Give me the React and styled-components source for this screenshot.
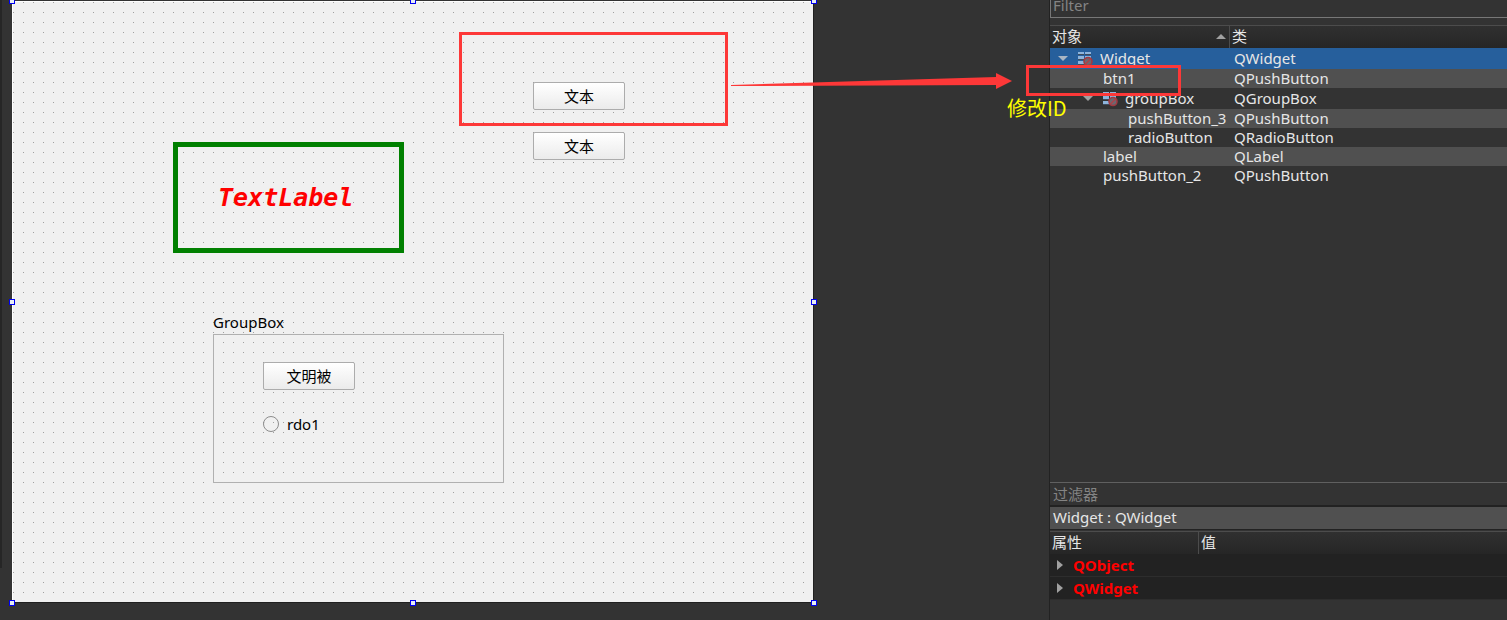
import React from "react";
import styled, { createGlobalStyle } from "styled-components";

const ui = `"Noto Sans", "Noto Sans CJK SC", sans-serif`;
const red = "#fd3838";

const Global = createGlobalStyle`
  * { box-sizing: border-box; }
  body { margin: 0; background: #333; font: 15px/20px ${ui}; color: #e6e6e6; }
  button, input { font: inherit; }
`;

const Page = styled.div`
  display: flex;
  min-height: 100vh;
  overflow: hidden;
`;

const Rail = styled.div`
  flex: 0 0 2px;
  background: #262626;
  margin-bottom: 52px;
`;

const Workspace = styled.main`
  position: relative;
  flex: 1;
  min-width: 0;
  padding: 1px 10px 17px;
`;

const Form = styled.div`
  position: relative;
  width: 801px;
  height: 601px;
  color: #000;
  border: solid #fff;
  border-width: 1px 0 0 1px;
  background-color: #f0f0f0;
  background-image: conic-gradient(from 270deg at 1px 1px, #a0a0a0 90deg, transparent 90deg);
  background-size: 10px 10px;
  box-shadow: 1px 1px 0 #202020;
`;

const Selection = styled.div`
  position: absolute;
  inset: -1px;
  pointer-events: none;
`;

const Handle = styled.i`
  position: absolute;
  left: ${(p) => p.$x};
  top: ${(p) => p.$y};
  width: 6px;
  height: 6px;
  margin: -3px 0 0 -3px;
  border: 1px solid #0000f0;
  background: #e8eef4;
`;

const Placed = styled.div`
  position: absolute;
  left: ${(p) => p.$left}px;
  top: ${(p) => p.$top}px;
`;

const PushButton = styled.button`
  display: block;
  width: 92px;
  height: 28px;
  padding: 0;
  border: 1px solid #acacac;
  border-radius: 2px;
  background: linear-gradient(#fff, #ebebeb);
  color: #000;
`;

const TextLabel = styled.div`
  display: flex;
  align-items: center;
  width: 231px;
  height: 111px;
  padding-left: 40px;
  border: 5px solid #008000;
  color: #f00;
  font: italic bold 25px/30px "DejaVu Sans Mono", monospace;
`;

const GroupTitle = styled.div`
  padding-bottom: 2px;
`;

const GroupFrame = styled.div`
  display: flex;
  flex-direction: column;
  gap: 24px;
  width: 291px;
  height: 149px;
  padding: 27px 49px;
  border: 1px solid #b0b0b0;
`;

const RadioLabel = styled.label`
  display: flex;
  align-items: center;
  gap: 8px;
`;

const Radio = styled.input`
  appearance: none;
  width: 16px;
  height: 16px;
  margin: 0;
  border: 1px solid #8c8c8c;
  border-radius: 50%;
`;

const Mark = styled.div`
  position: absolute;
  left: ${(p) => p.$left}px;
  top: ${(p) => p.$top}px;
  width: ${(p) => p.$w}px;
  height: ${(p) => p.$h}px;
  border: 3px solid ${red};
  pointer-events: none;
`;

const Arrow = styled.div`
  position: absolute;
  left: 729px;
  right: 37px;
  top: 73px;
  display: flex;
  svg { display: block; height: 16px; }
  svg:first-child { flex: 1; min-width: 0; }
`;

const Note = styled.div`
  position: absolute;
  left: -43px;
  top: 96px;
  color: #ff0;
  font-size: 20px;
  line-height: 24px;
  white-space: nowrap;
  font-family: "Noto Sans CJK SC", sans-serif;
`;

const Side = styled.aside`
  position: relative;
  flex: 0 0 458px;
  display: flex;
  flex-direction: column;
  border-left: 1px solid #222;
`;

const ObjectFilter = styled.input`
  height: 26px;
  margin: -8px 0 7px;
  padding: 0 2px;
  border: 1px solid #777;
  border-right: 0;
  background: #333;
  color: #e6e6e6;
  &::placeholder { color: #848484; opacity: 1; }
`;

const TreeArea = styled.div`
  flex: 1;
`;

const Table = styled.table`
  width: 100%;
  table-layout: fixed;
  border-collapse: separate;
  border-spacing: 0;
  th, td { padding: 0; font-weight: 400; text-align: left; white-space: nowrap; }
`;

const HeadCell = styled.th`
  width: ${(p) => p.$w || "auto"};
  height: 23px;
  border-top: 1px solid #4c4c4c;
  border-right: 1px solid #4c4c4c;
  background: linear-gradient(#303030, #262626);
  &:last-child { border-right: 0; }
`;

const HeadLabel = styled.div`
  display: flex;
  align-items: center;
  justify-content: space-between;
  padding: 0 3px 2px 2px;
  line-height: 20px;
`;

const TreeRow = styled.tr`
  height: ${(p) => (p.$tall ? 21 : 19)}px;
  background: ${(p) => p.$bg};
  line-height: 19px;
`;

const NameCell = styled.div`
  display: flex;
  align-items: center;
  padding-left: ${(p) => p.$indent}px;
  svg { flex: none; }
`;

const ClassName = styled.div`
  padding-left: 4px;
`;

const PropertyFilter = styled.input`
  height: 24px;
  padding: 0 3px;
  border: 0;
  border-top: 1px solid #606060;
  border-bottom: 1px solid #222;
  background: #333;
  color: #e6e6e6;
  &::placeholder { color: #848484; opacity: 1; }
`;

const Current = styled.div`
  height: 24px;
  margin-bottom: 1px;
  padding-left: 3px;
  line-height: 20px;
  background: #505050;
  border: solid #222;
  border-width: 1px 0;
`;

const Group = styled.tr`
  height: 23px;
  background: #222;
  color: #f00;
  td { border-bottom: 1px solid #2d2d2d; }
`;

const GroupName = styled.div`
  display: flex;
  align-items: center;
  gap: 10px;
  padding-left: 7px;
  font-weight: 700;
`;

const PropertyArea = styled.div`
  padding-bottom: 20px;
`;

const Caret = ({ color }) => (
  <svg width="10" height="5" viewBox="0 0 10 5"><path d="M0 0h10L5 5z" fill={color} /></svg>
);

const FormIcon = () => (
  <svg width="16" height="16" viewBox="0 0 16 16">
    <path d="M1 1h6v2H1zM8 1h6v2H8zM1 5h6v3H1zM8 5h6v3H8zM1 10h6v3H1z" fill="#8db4dc" />
    <path d="M1 3h6v1H1zM8 3h6v1H8zM1 8h6v1H1zM1 13h6v1H1z" fill="#3f4c5c" />
    <circle cx="11" cy="10.5" r="4" fill="#6c6870" stroke="#a03a42" strokeWidth="1.6" />
    <path d="M8.3 13.2l5.4-5.4" stroke="#b04048" strokeWidth="1.4" />
  </svg>
);

const IconSlot = styled.span`
  display: flex;
  margin: 0 7px 0 9px;
`;

const objects = [
  { name: "Widget", cls: "QWidget", depth: 8, open: true, bg: "#265f9c", caret: "#a9b6c4" },
  { name: "btn1", cls: "QPushButton", depth: 53, bg: "#505050" },
  { name: "groupBox", cls: "QGroupBox", depth: 33, open: true, bg: "#333", caret: "#a0a0a0" },
  { name: "pushButton_3", cls: "QPushButton", depth: 78, bg: "#505050" },
  { name: "radioButton", cls: "QRadioButton", depth: 78, bg: "#333" },
  { name: "label", cls: "QLabel", depth: 53, bg: "#505050" },
  { name: "pushButton_2", cls: "QPushButton", depth: 53, bg: "#333" },
];

const handles = [
  ["0%", "0%"], ["50%", "0%"], ["100%", "0%"],
  ["0%", "50%"], ["100%", "50%"],
  ["0%", "100%"], ["50%", "100%"], ["100%", "100%"],
];

export default function App() {
  return (
    <>
      <Global />
      <Page>
        <Rail />
        <Workspace>
          <Form>
            <Placed $left={520} $top={80}><PushButton>文本</PushButton></Placed>
            <Placed $left={520} $top={130}><PushButton>文本</PushButton></Placed>
            <Placed $left={160} $top={140}><TextLabel>TextLabel</TextLabel></Placed>
            <Placed $left={200} $top={310}>
              <GroupTitle>GroupBox</GroupTitle>
              <GroupFrame>
                <PushButton>文明被</PushButton>
                <RadioLabel><Radio type="radio" name="rdo" />rdo1</RadioLabel>
              </GroupFrame>
            </Placed>
            <Selection>
              {handles.map(([x, y]) => <Handle key={x + y} $x={x} $y={y} />)}
            </Selection>
          </Form>
          <Mark $left={457} $top={32} $w={269} $h={94} />
          <Arrow>
            <svg viewBox="0 0 265 16" preserveAspectRatio="none">
              <path d="M0 12L265 4V12L0 13z" fill={red} />
            </svg>
            <svg width="16" viewBox="0 0 16 16"><path d="M0 0L16 8L0 16z" fill={red} /></svg>
          </Arrow>
        </Workspace>
        <Side>
          <ObjectFilter placeholder="Filter" aria-label="Filter" />
          <TreeArea>
            <Table>
              <thead>
                <tr>
                  <HeadCell $w="180px"><HeadLabel>对象<svg width="10" height="5" viewBox="0 0 10 5"><path d="M0 5h10L5 0z" fill="#a0a0a0" /></svg></HeadLabel></HeadCell>
                  <HeadCell><HeadLabel>类</HeadLabel></HeadCell>
                </tr>
              </thead>
              <tbody>
                {objects.map((o) => (
                  <TreeRow key={o.name} $tall={o.open} $bg={o.bg}>
                    <td>
                      <NameCell $indent={o.depth}>
                        {o.open && <><Caret color={o.caret} /><IconSlot><FormIcon /></IconSlot></>}
                        {o.name}
                      </NameCell>
                    </td>
                    <td><ClassName>{o.cls}</ClassName></td>
                  </TreeRow>
                ))}
              </tbody>
            </Table>
          </TreeArea>
          <PropertyFilter placeholder="过滤器" aria-label="过滤器" />
          <Current>Widget : QWidget</Current>
          <PropertyArea>
            <Table>
              <thead>
                <tr>
                  <HeadCell $w="149px"><HeadLabel>属性</HeadLabel></HeadCell>
                  <HeadCell><HeadLabel>值</HeadLabel></HeadCell>
                </tr>
              </thead>
              <tbody>
                {["QObject", "QWidget"].map((n) => (
                  <Group key={n}>
                    <td colSpan={2}>
                      <GroupName>
                        <svg width="6" height="10" viewBox="0 0 6 10"><path d="M0 0v10l6-5z" fill="#a0a0a0" /></svg>
                        {n}
                      </GroupName>
                    </td>
                  </Group>
                ))}
              </tbody>
            </Table>
          </PropertyArea>
          <Mark $left={-24} $top={65} $w={155} $h={31} />
          <Note>修改ID</Note>
        </Side>
      </Page>
    </>
  );
}
